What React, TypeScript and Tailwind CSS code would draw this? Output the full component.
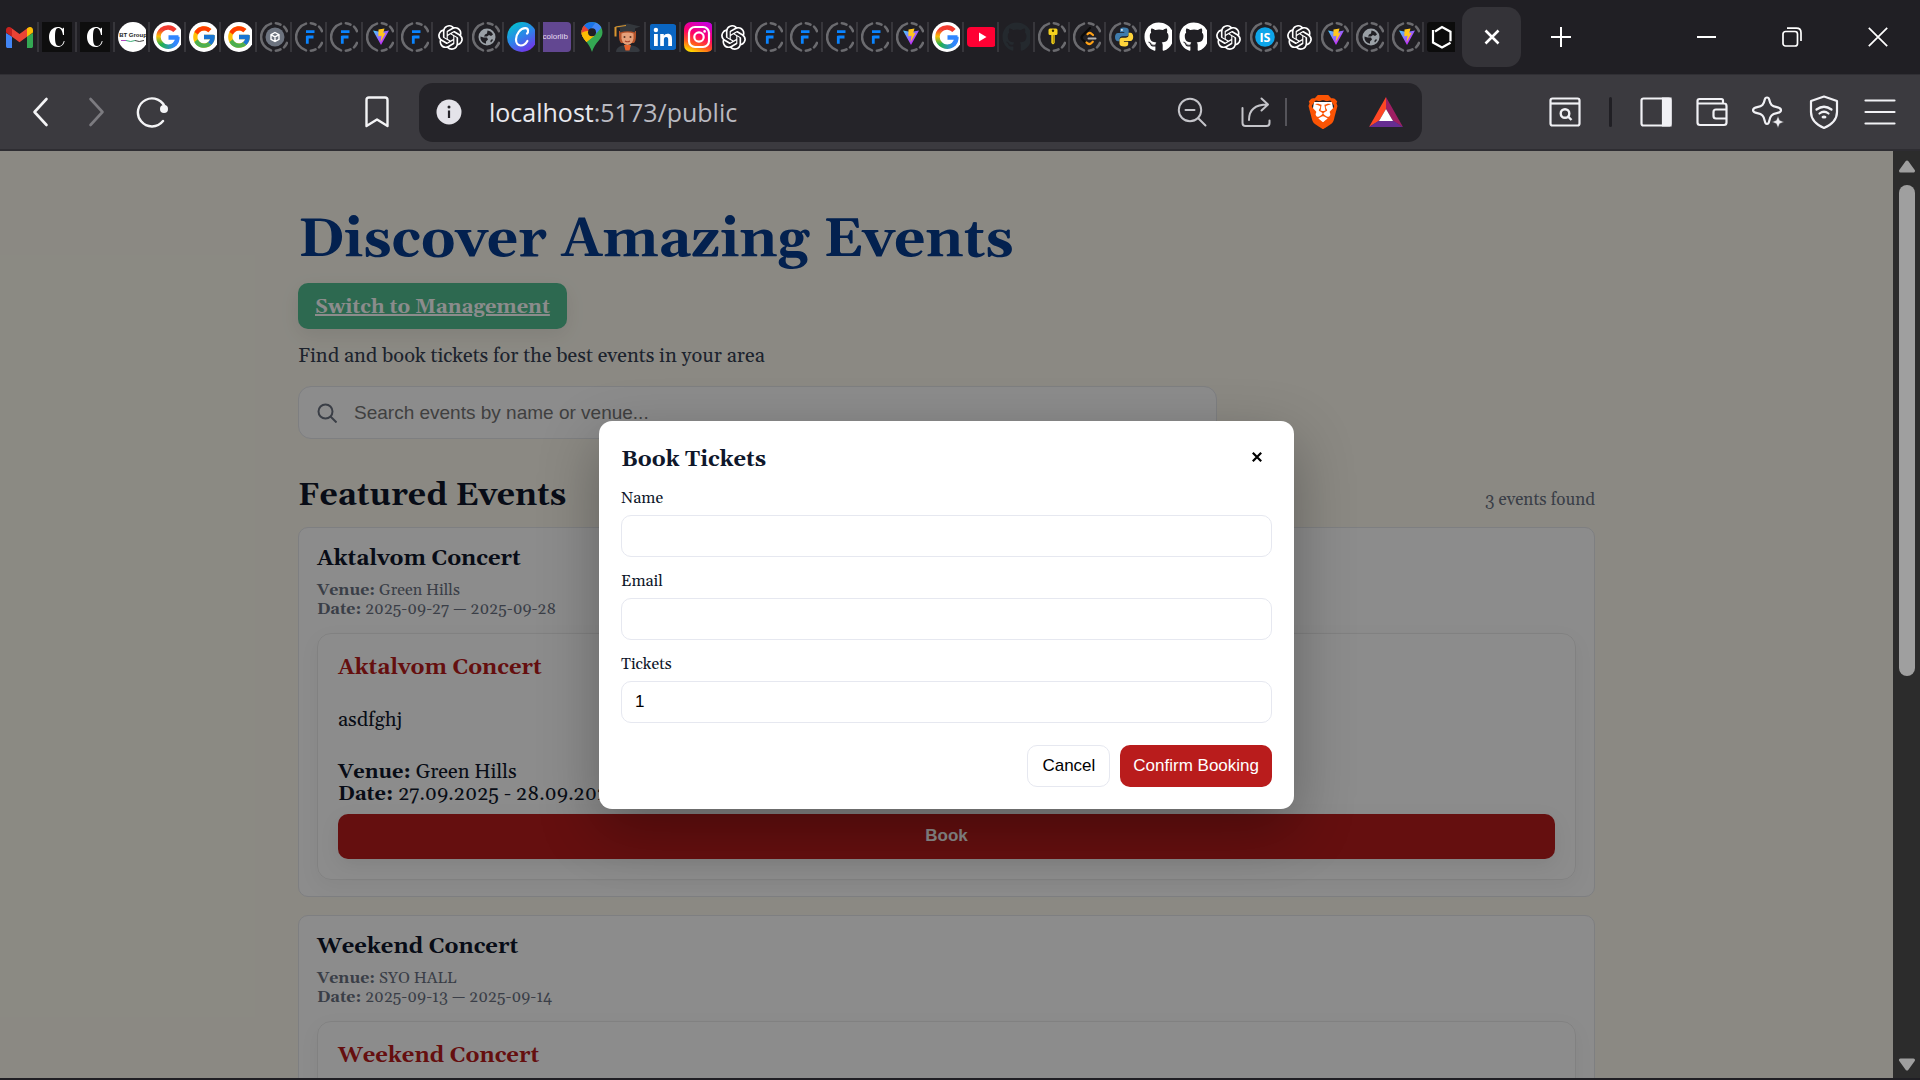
import React, { useState } from "react";
import { FaGithub } from "react-icons/fa";
import { FcGoogle } from "react-icons/fc";
import { SiBrave, SiOpenai } from "react-icons/si";

/* ---------- favicons ---------- */

function Ring({ children }: { children: React.ReactNode }) {
  return (
    <svg viewBox="0 0 30 30" className="h-[30px] w-[30px] shrink-0">
      <path
        d="M11 1.6A14 14 0 0 0 11 28.4M15.800 1.300Q18.500 1.500 20.500 2.600M24 4.600Q26 6.500 27 9.200M27 20.800Q26 23.500 24 25.400M20.500 27.400Q18.500 28.500 15.800 28.700"
        fill="none"
        stroke="#6b6b6f"
        strokeWidth="2.500"
        strokeLinecap="round"
      />
      {children}
    </svg>
  );
}

const Gmail = () => (
  <svg viewBox="0 0 27 21" className="h-[21px] w-[27px] shrink-0">
    <path d="M0 6v13.2C0 20.2.8 21 1.8 21H6V9.5z" fill="#4285f4" />
    <path d="M27 6v13.2c0 1-.8 1.8-1.8 1.8H21V9.5z" fill="#34a853" />
    <path d="M5 .8 13.5 7 22 .8l-1 9L13.500 15.200 6 9.800z" fill="#ea4335" />
    <path d="M6 2.600v7.200L0 5.400V3C0 .5 2.800-.9 4.800.6L6 1.500z" fill="#c5221f" />
    <path d="M21 1.500v8.300l6-4.400V3c0-2.500-2.800-3.900-4.800-2.400z" fill="#fbbc04" />
  </svg>
);

const LetterC = () => (
  <div className="flex h-[30px] w-[30px] shrink-0 items-center justify-center bg-[#0e0e0e]">
    <svg viewBox="0 0 30 30" className="h-[30px] w-[30px]">
      <path
        d="M22 5.500v7.500h-1C20.300 8.500 18.500 6 16.200 6c-2.400 0-3.200 3-3.200 9s1 9 3.800 9c2.600 0 4.200-1.900 5-5h.8C22 22.500 19.500 25 15.800 25 10.500 25 7 20.800 7 15S10.700 5 15.800 5c2.200 0 3.600.7 4.600 1.700z"
        fill="#fff"
      />
    </svg>
  </div>
);

const BtGroup = () => (
  <div className="flex h-[30px] w-[30px] shrink-0 flex-col items-center justify-center rounded-full bg-white">
    <span className="text-[6px] leading-[7px] font-bold whitespace-nowrap text-[#222]">BT Group</span>
    <svg viewBox="0 0 24 3" className="h-[3px] w-6">
      <path d="M0 1.500h5" stroke="#b04ac0" strokeWidth="1" />
      <path d="M5 1.500q5 2 9 0" stroke="#3fae7a" strokeWidth="1" fill="none" />
      <path d="M14 1.500q4 2 9 0" stroke="#444" strokeWidth="1" fill="none" />
    </svg>
  </div>
);

const Google = () => (
  <div className="flex h-[30px] w-[30px] shrink-0 items-center justify-center rounded-full bg-white">
    <FcGoogle className="h-[26px] w-[26px]" />
  </div>
);

const GoogleBlend = () => (
  <svg viewBox="0 0 30 30" className="h-[30px] w-[30px] shrink-0">
    <defs>
      <linearGradient id="g-left" x1="0" y1="0" x2="0" y2="1">
        <stop offset="0" stopColor="#f23b30" />
        <stop offset="0.450" stopColor="#fbbc04" />
        <stop offset="1" stopColor="#22b14c" />
      </linearGradient>
      <linearGradient id="g-bottom" x1="0" y1="0" x2="1" y2="0">
        <stop offset="0" stopColor="#22b14c" />
        <stop offset="1" stopColor="#3186ff" />
      </linearGradient>
    </defs>
    <circle cx="15" cy="15" r="15" fill="#fff" />
    <g fill="none" strokeWidth="4.500">
      <path d="M22 8.500A9.700 9.700 0 0 0 8.600 7.800" stroke="#f23b30" />
      <path d="M9 7.500A9.700 9.700 0 0 0 9 22.500" stroke="url(#g-left)" />
      <path d="M8.500 22A9.700 9.700 0 0 0 22 22" stroke="url(#g-bottom)" />
      <path d="M15.500 15.400H25.500M24.400 15A9.700 9.700 0 0 1 21.500 22.500" stroke="#3186ff" />
    </g>
  </svg>
);

const Cube = () => (
  <Ring>
    <circle cx="15" cy="15" r="9.500" fill="#6d7480" />
    <path d="M15 10.500l4 2.200v4.600l-4 2.200-4-2.200v-4.600zM11 12.700l4 2.200 4-2.200M15 15v4.500" fill="none" stroke="#fff" strokeWidth="1.400" />
  </Ring>
);

const LetterF = () => (
  <Ring>
    <path d="M11 9.700h8.500M12.300 15H18.500M12.300 13.700v8" fill="none" stroke="#0a84ff" strokeWidth="2.800" />
  </Ring>
);

const Vite = () => (
  <Ring>
    <defs>
      <linearGradient id="vite-body" x1="0" y1="0" x2="1" y2="1">
        <stop offset="0" stopColor="#41d1ff" />
        <stop offset="0.700" stopColor="#bd34fe" />
      </linearGradient>
    </defs>
    <path d="M7 8.500 15 23 23 8.500 15 10z" fill="url(#vite-body)" />
    <path d="M12.500 7.500l6-.9-1.300 4.600 2.300-.3-4.800 9.100.8-6.200-3.200.5z" fill="#ffc61e" />
  </Ring>
);

const OpenAi = () => <SiOpenai className="h-[25px] w-[25px] shrink-0 text-white" />;

const Globe = () => (
  <Ring>
    <circle cx="15" cy="15" r="8.500" fill="#9aa0a6" />
    <path d="M15.500 8.500q4 .5 5.500 4l-2 1.500-2-1-2 1.500h-3l1-2 2-1zM8.500 14.500l3 1 3.500 0 1 2-2 2 0 2.200q-4.500-1-5.500-5zM20 17l1 1-2 2.500-.8-1.500z" fill="#201f24" />
  </Ring>
);

const Canva = () => (
  <svg viewBox="0 0 30 30" className="h-[30px] w-[30px] shrink-0">
    <defs>
      <linearGradient id="canva-body" x1="0.200" y1="0" x2="0.800" y2="1">
        <stop offset="0" stopColor="#00c4cc" />
        <stop offset="0.500" stopColor="#2f80ea" />
        <stop offset="1" stopColor="#7d2ae8" />
      </linearGradient>
    </defs>
    <circle cx="15" cy="15" r="15" fill="url(#canva-body)" />
    <path d="M20 11.500c1.500-1 1.800-5.300-1.700-5.300-5 0-9.300 6-9.300 11.300 0 3.700 2 6 4.800 6 3 0 5.200-2 6.600-4.500" fill="none" stroke="#fff" strokeWidth="2.200" strokeLinecap="round" />
  </svg>
);

const Colorlib = () => (
  <div className="flex h-[30px] w-[30px] shrink-0 items-center bg-[#624791]">
    <span className="text-[8px] whitespace-nowrap text-[#e6ddf2]">colorlib</span>
  </div>
);

const MapsPin = () => (
  <svg viewBox="0 0 22 30" className="h-[30px] w-[22px] shrink-0">
    <defs>
      <clipPath id="pin-shape">
        <path d="M11 0C4.900 0 .5 4.600.5 10.300c0 3.200 1.500 5.500 3.500 7.900C7 21.800 9.400 24.500 11 30c1.600-5.500 4-8.200 7-11.800 2-2.400 3.500-4.700 3.500-7.900C21.500 4.600 17.100 0 11 0z" />
      </clipPath>
    </defs>
    <g clipPath="url(#pin-shape)">
      <path d="M0 0h22v30H0z" fill="#34a853" />
      <path d="M0 8 9 9 13 14 3 22-2 16z" fill="#fbbc04" />
      <path d="M-1 13V0h4l7 8-7 7z" fill="#ea4335" />
      <path d="M-1 11.500 3.500 9.500 9 8.500 13 14 4 21z" fill="#fbbc04" />
      <path d="M3 3.500 9 9 15 0 14-1H6z" fill="#1a73e8" />
      <path d="M15 0 9 8 13 14 22 4V0z" fill="#4285f4" />
    </g>
    <circle cx="11" cy="10.300" r="4" fill="#201f24" />
  </svg>
);

const Student = () => (
  <svg viewBox="0 0 30 30" className="h-[30px] w-[30px] shrink-0">
    <path d="M6 9h17v5q0 5-2 7H8q-2-2-2-7z" fill="#b5532a" />
    <path d="M8.500 11.500q6-2 12 0v5q-1 6.500-6 6.500t-6-6.500z" fill="#e5a07a" />
    <path d="M3 30q0-5 6.500-6.500h10Q27 25 27 30z" fill="#35393f" />
    <path d="M11 23h7l-1.500 5.500h-4z" fill="#e8622c" />
    <path d="M1.500 4.500 14.500 1.500 27.500 4.500 22 6.500v4q-7-2.500-15 0v-4z" fill="#33373c" />
    <path d="M2.500 5v9.500" stroke="#d9962e" strokeWidth="2" />
    <path d="M2.500 5 13 3.500" stroke="#d9962e" strokeWidth="1" />
    <circle cx="11.500" cy="15" r="1" fill="#5a3524" />
    <circle cx="17.500" cy="15" r="1" fill="#5a3524" />
    <path d="M12 19q2.500 1.500 5 0" stroke="#a8432c" strokeWidth="1.200" fill="none" />
  </svg>
);

const LinkedIn = () => (
  <svg viewBox="0 0 26 26" className="h-[26px] w-[26px] shrink-0">
    <rect width="26" height="26" rx="2" fill="#0a66c2" />
    <circle cx="5.900" cy="6" r="2.200" fill="#fff" />
    <path d="M4 10h3.800v12H4zM10.200 10h3.600v1.700c.7-1.200 2-2 3.800-2 3.700 0 4.400 2.400 4.400 5.600V22h-3.800v-6c0-1.600-.2-3-2.100-3s-2.200 1.500-2.200 3v6h-3.700z" fill="#fff" />
  </svg>
);

const Instagram = () => (
  <svg viewBox="0 0 30 30" className="h-[30px] w-[30px] shrink-0">
    <defs>
      <linearGradient id="insta-body" x1="0.700" y1="0" x2="0.300" y2="1">
        <stop offset="0" stopColor="#c800e0" />
        <stop offset="0.450" stopColor="#ff0069" />
        <stop offset="0.750" stopColor="#ff5a1f" />
        <stop offset="1" stopColor="#ffd600" />
      </linearGradient>
    </defs>
    <rect width="30" height="30" rx="7" fill="url(#insta-body)" />
    <rect x="5" y="5" width="20" height="20" rx="6" fill="none" stroke="#fff" strokeWidth="2.200" />
    <circle cx="15" cy="15" r="4.700" fill="none" stroke="#fff" strokeWidth="2.200" />
    <circle cx="20.600" cy="9.400" r="1.300" fill="#fff" />
  </svg>
);

const YouTube = () => (
  <svg viewBox="0 0 30 30" className="h-[30px] w-[30px] shrink-0">
    <rect x="0" y="5" width="29" height="20" rx="4" fill="#ff0033" />
    <path d="M12 10.500v9l7.500-4.500z" fill="#fff" />
  </svg>
);

const GithubDim = () => <FaGithub className="h-[30px] w-[30px] shrink-0 text-[#24292e]" />;
const Github = () => <FaGithub className="h-[30px] w-[30px] shrink-0 text-white" />;

const KeyIcon = () => (
  <Ring>
    <path d="M12 6.500h6q1.500 0 1.500 1.500v3.500q0 1.500-1.500 1.500h-1.300v8L15 22.500 13.300 21v-8H12q-1.500 0-1.500-1.500V8q0-1.500 1.500-1.500z" fill="#f5d21d" />
    <path d="M15.300 13v8" stroke="#a88a00" strokeWidth="1" />
    <circle cx="15" cy="8.800" r="1.200" fill="#3a3000" />
  </Ring>
);

const LeetCode = () => (
  <Ring>
    <path d="M17 6 9.300 13.700q-1.500 1.700 0 3.500l3 3" fill="none" stroke="#0b0b0b" strokeWidth="2.300" strokeLinecap="round" />
    <path d="M14.500 12.200q2-2.300 4-.5l1.500 1.300M13.500 20.500q2.500 2.500 4.500.8l1.800-1.600" fill="none" stroke="#ffa116" strokeWidth="2.200" strokeLinecap="round" />
    <path d="M15.500 16.500h7" stroke="#b3b3b3" strokeWidth="2" strokeLinecap="round" />
  </Ring>
);

const Python = () => (
  <Ring>
    <path d="M15 5.500c-3.500 0-4 1.300-4 2.700v2h4.300v.8H9c-2 0-3 1.700-3 4s1 4.300 3 4.300h1.600v-2.400c0-1.700 1.400-2.700 2.900-2.700h4c1.300 0 2.200-1 2.200-2.300V8.200c0-1.600-1.500-2.700-4.700-2.700z" fill="#3f7cac" />
    <path d="M15.200 24.500c3.500 0 4-1.300 4-2.700v-2h-4.300V19h6.300c2 0 3-1.700 3-4s-1-4.300-3-4.300h-1.600v2.400c0 1.700-1.400 2.700-2.900 2.700h-4c-1.300 0-2.200 1-2.200 2.300v3.700c0 1.600 1.500 2.700 4.700 2.700z" fill="#ffd43b" />
    <circle cx="12.900" cy="7.900" r="0.900" fill="#fff" />
  </Ring>
);

const Ishosting = () => (
  <Ring>
    <circle cx="15" cy="15" r="9.800" fill="#0ea5e9" />
    <text x="15" y="19.500" textAnchor="middle" fill="#fff" fontSize="12.500" fontWeight="700" fontFamily="Open Sans, sans-serif">IS</text>
  </Ring>
);

const Hexagon = () => (
  <div className="flex h-[30px] w-[30px] shrink-0 items-center justify-center rounded-[3px] bg-[#0c0c0c]">
    <svg viewBox="0 0 30 30" className="h-[30px] w-[30px]">
      <path d="M8 9.500 15 5l8.500 4.700v9.500" fill="none" stroke="#fff" strokeWidth="2.200" />
      <path d="M6 8v12.500l9 5 8.500-4.800" fill="none" stroke="#fff" strokeWidth="2.200" />
    </svg>
  </div>
);

const leadTabs = [Gmail, LetterC, LetterC];
const tabs = [
  BtGroup, GoogleBlend, Google, Google, Cube, LetterF, LetterF, Vite, LetterF, OpenAi,
  Globe, Canva, Colorlib, MapsPin, Student, LinkedIn, Instagram, OpenAi, LetterF, LetterF,
  LetterF, LetterF, Vite, GoogleBlend, YouTube, GithubDim, KeyIcon, LeetCode, Python, Github,
  Github, OpenAi, Ishosting, OpenAi, Vite, Globe, Vite,
];

function TabStrip() {
  return (
    <header className="flex h-[75px] shrink-0 items-center border-b border-[#302f34] bg-[#201f24]">
      <div className="flex w-[1424px] items-center pl-px">
        {leadTabs.map((Icon, i) => (
          <button key={i} type="button" aria-label="Open tab" className="flex h-[30px] w-[38px] shrink-0 items-center justify-center border-r-2 border-[#37363b]">
            <Icon />
          </button>
        ))}
        {tabs.map((Icon, i) => (
          <button key={i} type="button" aria-label="Open tab" className="flex h-[30px] min-w-0 flex-1 items-center border-r-2 border-[#37363b] pl-[3px]">
            <span className="flex w-7 items-center justify-start overflow-hidden rounded-r-[4px] [&>svg]:mx-auto">
              <Icon />
            </span>
          </button>
        ))}
      </div>
      <button type="button" aria-label="Open tab" className="ml-[3px] flex w-7 overflow-hidden">
        <Hexagon />
      </button>
      <button type="button" aria-label="Close tab" className="ml-[7px] flex h-[60px] w-[59px] items-center justify-center rounded-[14px] bg-[#343338]">
        <svg viewBox="0 0 16 16" className="h-4 w-4" stroke="#fff" strokeWidth="2.600">
          <path d="M1.500 1.500l13 13M14.500 1.500l-13 13" />
        </svg>
      </button>
      <button type="button" aria-label="New tab" className="ml-[30px]">
        <svg viewBox="0 0 20 20" className="h-5 w-5" stroke="#fff" strokeWidth="2">
          <path d="M10 0v20M0 10h20" />
        </svg>
      </button>
      <div className="mr-8 ml-auto flex items-center gap-[66px]">
        <button type="button" aria-label="Minimize">
          <svg viewBox="0 0 20 20" className="h-5 w-5" stroke="#fff" strokeWidth="2">
            <path d="M1 10h19" />
          </svg>
        </button>
        <button type="button" aria-label="Restore">
          <svg viewBox="0 0 20 20" className="h-5 w-5" fill="none" stroke="#fff" strokeWidth="1.700">
            <rect x="1" y="4.500" width="14.500" height="14.500" rx="2.500" />
            <path d="M5 1.200h9.500q4.500 0 4.500 4.500V14" />
          </svg>
        </button>
        <button type="button" aria-label="Close window">
          <svg viewBox="0 0 20 20" className="h-5 w-5" stroke="#fff" strokeWidth="1.700">
            <path d="M.8.8l18.400 18.400M19.200.8.800 19.200" />
          </svg>
        </button>
      </div>
    </header>
  );
}

function Toolbar() {
  return (
    <nav className="flex h-[76px] shrink-0 items-center border-b-2 border-[#2e2d32] bg-[#3b3a3f]">
      <button type="button" aria-label="Back" className="ml-[26px]">
        <svg viewBox="0 0 30 30" className="h-[30px] w-[30px]" fill="none" stroke="#f4f4f6" strokeWidth="2.600" strokeLinecap="round" strokeLinejoin="round">
          <path d="M20.500 2 8.500 15l12 13" />
        </svg>
      </button>
      <button type="button" aria-label="Forward" className="ml-[26px]">
        <svg viewBox="0 0 30 30" className="h-[30px] w-[30px]" fill="none" stroke="#7c7b80" strokeWidth="2.600" strokeLinecap="round" strokeLinejoin="round">
          <path d="M8.500 2l12 13-12 13" />
        </svg>
      </button>
      <button type="button" aria-label="Reload" className="ml-6">
        <svg viewBox="0 0 34 32" className="h-8 w-[34px]" fill="none" stroke="#f4f4f6" strokeWidth="2.400" strokeLinecap="round">
          <path d="M29.500 13A14 14 0 1 0 27 25" />
          <circle cx="28" cy="13" r="4" fill="#f4f4f6" stroke="none" />
        </svg>
      </button>
      <button type="button" aria-label="Bookmark" className="ml-[195px]">
        <svg viewBox="0 0 24 32" className="h-8 w-6" fill="none" stroke="#f4f4f6" strokeWidth="2.400" strokeLinejoin="round">
          <path d="M1.500 4q0-2.500 2.500-2.500h16q2.500 0 2.500 2.500v26L12 23.500 1.500 30z" />
        </svg>
      </button>
      <div className="ml-[30px] flex h-[59px] w-[1003px] items-center rounded-[14px] bg-[#252429]">
        <button type="button" aria-label="Site information" className="ml-[17px]">
          <svg viewBox="0 0 26 26" className="h-[26px] w-[26px]">
            <circle cx="13" cy="13" r="12.500" fill="#e4e3e9" />
            <circle cx="13" cy="8" r="1.500" fill="#252429" />
            <path d="M13 11.500V19" stroke="#252429" strokeWidth="2.200" />
          </svg>
        </button>
        <a href="#" className="ml-[27px] font-['Open_Sans',sans-serif] text-[25px] leading-8 text-[#e9e9ee]">
          localhost<span className="text-[#b9b9c0]">:5173/public</span>
        </a>
        <div className="mr-[19px] ml-auto flex items-center">
          <button type="button" aria-label="Zoom">
            <svg viewBox="0 0 30 30" className="h-[30px] w-[30px]" fill="none" stroke="#c4c4c9" strokeWidth="2" strokeLinecap="round">
              <circle cx="13" cy="13" r="11.200" />
              <path d="M21 21l7.500 7.500M8.500 13h9" />
            </svg>
          </button>
          <button type="button" aria-label="Share" className="ml-[34px]">
            <svg viewBox="0 0 30 30" className="h-[30px] w-[30px]" fill="none" stroke="#c4c4c9" strokeWidth="2" strokeLinecap="round" strokeLinejoin="round">
              <path d="M1.500 11v15q0 3 3 3h21q3 0 3-3v-2.500" />
              <path d="M8 23C8 13 14 7.500 26.500 7.500M20.500 1.500l6.500 6-6.500 6" />
            </svg>
          </button>
          <span className="ml-[14px] h-7 w-[2px] bg-[#55545a]" />
          <button type="button" aria-label="Brave Shields" className="ml-[19px]">
            <svg viewBox="0 0 34 36" className="h-9 w-[34px]">
              <path d="M8 8h18l2 12-11 10L6 20z" fill="#fff" />
              <SiBrave size={34} y={1} color="#fb5404" />
            </svg>
          </button>
          <button type="button" aria-label="Rewards" className="ml-[29px]">
            <svg viewBox="0 0 34 31" className="h-[31px] w-[34px]">
              <path d="M17 0 0 30l10-6 7-12z" fill="#ff4724" />
              <path d="M17 0l17 30-10-6-7-12z" fill="#9e1f63" />
              <path d="M0 30h34l-10-6.500H10z" fill="#662d91" />
              <path d="M17 12l7 12H10z" fill="#fff" />
            </svg>
          </button>
        </div>
      </div>
      <div className="mr-[24px] ml-auto flex items-center gap-6 text-[#f1f1f5]">
        <button type="button" aria-label="Search tabs">
          <svg viewBox="0 0 32 30" className="h-[30px] w-8" fill="none" stroke="currentColor" strokeWidth="2.200">
            <rect x="1.500" y="1.500" width="29" height="27" rx="2" />
            <path d="M1.500 6.500h29" />
            <circle cx="16" cy="16.500" r="4.300" strokeWidth="2.400" />
            <path d="M19 19.500l3.500 3.500" strokeWidth="2.400" />
          </svg>
        </button>
        <span className="mx-1 h-[30px] w-[3px] rounded bg-[#201f24]" />
        <button type="button" aria-label="Sidebar">
          <svg viewBox="0 0 32 30" className="h-[30px] w-8" fill="none" stroke="currentColor" strokeWidth="2.200">
            <rect x="1.500" y="1.500" width="29" height="27" rx="2" />
            <path d="M23 1.500h7.500v27H23z" fill="currentColor" />
          </svg>
        </button>
        <button type="button" aria-label="Wallet">
          <svg viewBox="0 0 32 30" className="h-[30px] w-8" fill="none" stroke="currentColor" strokeWidth="2.200" strokeLinejoin="round">
            <path d="M27 6V3.500q0-1.500-1.500-1.500H3.500Q1.500 2 1.500 4v21.500q0 2.500 2.500 2.500h24q2.500 0 2.500-2.500V9q0-2.500-2.500-2.500H2" />
            <path d="M30.500 12.500H20q-2.500 0-2.500 2.500v4q0 2.500 2.500 2.500h10.500" />
          </svg>
        </button>
        <button type="button" aria-label="Leo AI">
          <svg viewBox="0 0 32 32" className="h-8 w-8" fill="none" stroke="currentColor" strokeWidth="2.200" strokeLinejoin="round">
            <path d="M15 1.500c1.300 0 2 .8 2.300 2.200 1 5 2.500 6.500 7.500 7.500 3 .6 4.200 1.500 4.200 3s-1.200 2.400-4.200 3c-5 1-6.500 2.500-7.500 7.500-.3 2-1 3.300-2.300 3.300s-2-1.300-2.300-3.300c-1-5-2.500-6.500-7.500-7.500-3-.6-4.200-1.500-4.200-3s1.200-2.400 4.200-3c5-1 6.500-2.500 7.500-7.500.3-1.400 1-2.200 2.300-2.200z" />
            <path d="M26 20l1.700 4.300L32 26l-4.300 1.700L26 32l-1.700-4.300L20 26l4.300-1.700z" fill="currentColor" stroke="#3b3a3f" strokeWidth="0.500" />
          </svg>
        </button>
        <button type="button" aria-label="VPN">
          <svg viewBox="0 0 32 34" className="h-[34px] w-8" fill="none" stroke="currentColor" strokeWidth="2.200" strokeLinecap="round" strokeLinejoin="round">
            <path d="M16 1.500 29 6v11c0 7-5 12.500-13 16C8 29.500 3 24 3 17V6z" />
            <path d="M8.500 14.500q7.500-5.500 15 0M11.500 18.500q4.500-3.500 9 0" />
            <ellipse cx="16" cy="22" rx="2.500" ry="1.500" fill="currentColor" stroke="none" />
          </svg>
        </button>
        <button type="button" aria-label="Menu">
          <svg viewBox="0 0 32 28" className="h-7 w-8" stroke="currentColor" strokeWidth="2.200" strokeLinecap="round">
            <path d="M1.500 2.500h29M1.500 14h29M1.500 25.500h29" />
          </svg>
        </button>
      </div>
    </nav>
  );
}

/* ---------- page ---------- */

type EventItem = {
  name: string;
  venue: string;
  range: string;
  description: string;
  localRange: string;
};

const events: EventItem[] = [
  { name: "Aktalvom Concert", venue: "Green Hills", range: "2025-09-27 — 2025-09-28", description: "asdfghj", localRange: "27.09.2025 - 28.09.2025" },
  { name: "Weekend Concert", venue: "SYO HALL", range: "2025-09-13 — 2025-09-14", description: "", localRange: "13.09.2025 - 14.09.2025" },
];

function EventCard({ event }: { event: EventItem }) {
  return (
    <article className="rounded-[10px] border border-gray-200 bg-white px-[18px] pt-[15px] pb-4">
      <h3 className="text-[22px] leading-8 font-bold">{event.name}</h3>
      <p className="mt-[6px] text-[16px] leading-[19px] text-gray-500">
        <strong>Venue:</strong> {event.venue}
        <br />
        <strong>Date:</strong> {event.range}
      </p>
      <div className="mt-[14px] rounded-[14px] border border-black/8 px-5 pt-[18px] pb-5 shadow-[0_6px_20px_rgba(0,0,0,0.05)]">
        <h4 className="text-[22px] leading-8 font-bold text-[#b91c1c]">{event.name}</h4>
        <p className="mt-[25px] text-[20px] leading-[22px]">{event.description}</p>
        <p className="mt-[30px] text-[20px] leading-[22px]">
          <strong>Venue:</strong> {event.venue}
          <br />
          <strong>Date:</strong> {event.localRange}
        </p>
        <button type="button" className="mt-[9px] h-[45px] w-full rounded-[10px] bg-[#b91c1c] pb-[2px] font-['Liberation_Sans',sans-serif] text-[17px] font-bold text-white shadow-[0_6px_20px_rgba(0,0,0,0.08)]">
          Book
        </button>
      </div>
    </article>
  );
}

function Field({ id, label, type, value, onChange }: { id: string; label: string; type: string; value: string; onChange: (v: string) => void }) {
  return (
    <div className="flex flex-col gap-[7px]">
      <label htmlFor={id} className="text-[16px] leading-5">{label}</label>
      <input
        id={id}
        type={type}
        value={value}
        onChange={(e) => onChange(e.target.value)}
        className="h-[42px] w-full rounded-[10px] border border-[#e6e8f0] bg-white px-[13px] font-['Liberation_Sans',sans-serif] text-[17px] text-black outline-none"
      />
    </div>
  );
}

function BookingModal() {
  const [name, setName] = useState("");
  const [email, setEmail] = useState("");
  const [tickets, setTickets] = useState("1");
  return (
    <div className="absolute inset-0 flex items-center justify-center bg-black/45">
      <div role="dialog" aria-labelledby="booking-title" className="w-full max-w-[695px] rounded-[13px] bg-white px-[22px] pt-[23px] pb-[22px] shadow-[0_20px_60px_rgba(0,0,0,0.3)]">
        <div className="flex items-center justify-between">
          <h2 id="booking-title" className="text-[22px] leading-8 font-bold">Book Tickets</h2>
          <button type="button" aria-label="Close" className="mr-[7px] mb-[6px] p-[3px]">
            <svg viewBox="0 0 10 10" className="h-[10px] w-[10px]" stroke="#000" strokeWidth="2.200">
              <path d="M.8.8l8.400 8.400M9.200.8.800 9.200" />
            </svg>
          </button>
        </div>
        <form className="mt-3 flex flex-col gap-[14px]" onSubmit={(e) => e.preventDefault()}>
          <Field id="name" label="Name" type="text" value={name} onChange={setName} />
          <Field id="email" label="Email" type="email" value={email} onChange={setEmail} />
          <Field id="tickets" label="Tickets" type="number" value={tickets} onChange={setTickets} />
          <div className="mt-2 flex justify-end gap-[10px] font-['Liberation_Sans',sans-serif] text-[17px]">
            <button type="button" className="h-[42px] rounded-[10px] border border-[#e6e8f0] px-[14px] text-black">Cancel</button>
            <button type="submit" className="h-[42px] rounded-[10px] bg-[#b91c1c] px-[13px] text-white">Confirm Booking</button>
          </div>
        </form>
      </div>
    </div>
  );
}

function EventsPage() {
  return (
    <main className="relative min-w-0 flex-1 overflow-hidden bg-[#fdfaef] font-['Gelasio','Liberation_Serif',serif] text-slate-900">
      <div className="mx-auto max-w-[1297px] pt-[53px]">
        <h1 className="text-[55px] leading-[72px] font-bold text-[#063c90]">Discover Amazing Events</h1>
        <a href="#" className="mt-[7px] inline-flex h-[46px] items-center rounded-[10px] bg-[#52bf93] px-[17px] pt-[2px] text-[20px] font-bold text-white underline shadow-[0_6px_20px_rgba(0,0,0,0.08)]">
          Switch to Management
        </a>
        <p className="mt-[13px] text-[20px] leading-7 text-gray-700">Find and book tickets for the best events in your area</p>
        <div className="mt-4 flex h-[53px] max-w-[919px] items-center rounded-[13px] border border-gray-200 bg-white pl-[18px]">
          <svg viewBox="0 0 20 20" className="h-5 w-5 shrink-0" fill="none" stroke="#6b7280" strokeWidth="2">
            <circle cx="8.500" cy="8.500" r="7" />
            <path d="M13.500 13.500l6 6" />
          </svg>
          <input
            type="search"
            aria-label="Search events"
            placeholder="Search events by name or venue..."
            className="ml-[17px] h-full min-w-0 flex-1 bg-transparent font-['Liberation_Sans',sans-serif] text-[19px] outline-none placeholder:text-[#757575]"
          />
        </div>
        <div className="mt-[35px] flex items-baseline justify-between">
          <h2 className="text-[32px] leading-[44px] font-bold">Featured Events</h2>
          <span className="text-[17px] text-gray-500">3 events found</span>
        </div>
        <section className="mt-[9px] flex flex-col gap-[18px]">
          {events.map((event) => (
            <EventCard key={event.name} event={event} />
          ))}
        </section>
      </div>
      <BookingModal />
    </main>
  );
}

function Scrollbar() {
  return (
    <aside aria-hidden="true" className="flex w-[27px] shrink-0 flex-col items-center bg-[#2c2c2c] pt-[9px] pb-[7px]">
      <svg viewBox="0 0 18 13" className="h-[13px] w-[18px]" fill="#9f9f9f" stroke="#9f9f9f" strokeWidth="3" strokeLinejoin="round">
        <path d="M9 2l6.500 9h-13z" />
      </svg>
      <span className="mt-3 h-[491px] w-4 rounded-full bg-[#9f9f9f]" />
      <svg viewBox="0 0 18 13" className="mt-auto h-[13px] w-[18px]" fill="#9f9f9f" stroke="#9f9f9f" strokeWidth="3" strokeLinejoin="round">
        <path d="M9 11 2.500 2h13z" />
      </svg>
    </aside>
  );
}

export default function App() {
  return (
    <div className="flex h-screen flex-col overflow-hidden bg-[#201f24] font-['Liberation_Sans',sans-serif]">
      <TabStrip />
      <Toolbar />
      <div className="flex min-h-0 flex-1 border-b-2 border-[#201f24]">
        <EventsPage />
        <Scrollbar />
      </div>
    </div>
  );
}
